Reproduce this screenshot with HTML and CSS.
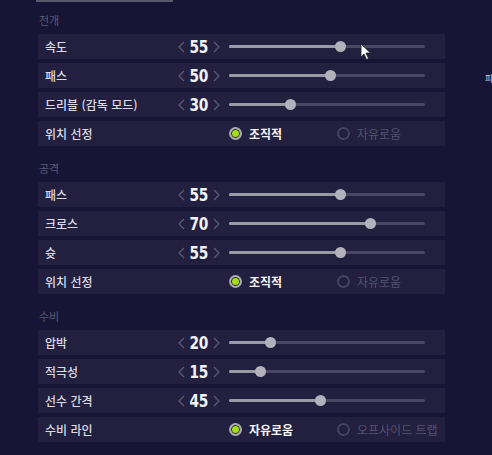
FILE: index.html
```html
<!DOCTYPE html>
<html lang="ko">
<head>
    <meta charset="UTF-8">
    <meta name="viewport" content="width=device-width, initial-scale=1.0">
    <title>전술 설정</title>
    <link rel="stylesheet" href="styles.css">
</head>
<body>
    <div class="tab-line"></div>

    <div class="panel">
        <div class="section">
            <div class="section-title">전개</div>
            <div class="row">
                <span class="label">속도</span>
                <div class="stepper">
                    <svg class="chev" viewBox="0 0 7 12"><polyline points="6,1 1,6 6,11"/></svg>
                    <span class="num">55</span>
                    <svg class="chev" viewBox="0 0 7 12"><polyline points="1,1 6,6 1,11"/></svg>
                </div>
                <div class="slider"><div class="fill" style="width: 111px"></div><div class="thumb" style="left: 111px"></div></div>
            </div>
            <div class="row">
                <span class="label">패스</span>
                <div class="stepper">
                    <svg class="chev" viewBox="0 0 7 12"><polyline points="6,1 1,6 6,11"/></svg>
                    <span class="num">50</span>
                    <svg class="chev" viewBox="0 0 7 12"><polyline points="1,1 6,6 1,11"/></svg>
                </div>
                <div class="slider"><div class="fill" style="width: 101px"></div><div class="thumb" style="left: 101px"></div></div>
            </div>
            <div class="row">
                <span class="label">드리블 (감독 모드)</span>
                <div class="stepper">
                    <svg class="chev" viewBox="0 0 7 12"><polyline points="6,1 1,6 6,11"/></svg>
                    <span class="num">30</span>
                    <svg class="chev" viewBox="0 0 7 12"><polyline points="1,1 6,6 1,11"/></svg>
                </div>
                <div class="slider"><div class="fill" style="width: 61px"></div><div class="thumb" style="left: 61px"></div></div>
            </div>
            <div class="row">
                <span class="label">위치 선정</span>
                <div class="radios">
                    <div class="option selected"><span class="radio"></span>조직적</div>
                    <div class="option"><span class="radio"></span>자유로움</div>
                </div>
            </div>
        </div>

        <div class="section">
            <div class="section-title">공격</div>
            <div class="row">
                <span class="label">패스</span>
                <div class="stepper">
                    <svg class="chev" viewBox="0 0 7 12"><polyline points="6,1 1,6 6,11"/></svg>
                    <span class="num">55</span>
                    <svg class="chev" viewBox="0 0 7 12"><polyline points="1,1 6,6 1,11"/></svg>
                </div>
                <div class="slider"><div class="fill" style="width: 111px"></div><div class="thumb" style="left: 111px"></div></div>
            </div>
            <div class="row">
                <span class="label">크로스</span>
                <div class="stepper">
                    <svg class="chev" viewBox="0 0 7 12"><polyline points="6,1 1,6 6,11"/></svg>
                    <span class="num">70</span>
                    <svg class="chev" viewBox="0 0 7 12"><polyline points="1,1 6,6 1,11"/></svg>
                </div>
                <div class="slider"><div class="fill" style="width: 141px"></div><div class="thumb" style="left: 141px"></div></div>
            </div>
            <div class="row">
                <span class="label">슛</span>
                <div class="stepper">
                    <svg class="chev" viewBox="0 0 7 12"><polyline points="6,1 1,6 6,11"/></svg>
                    <span class="num">55</span>
                    <svg class="chev" viewBox="0 0 7 12"><polyline points="1,1 6,6 1,11"/></svg>
                </div>
                <div class="slider"><div class="fill" style="width: 111px"></div><div class="thumb" style="left: 111px"></div></div>
            </div>
            <div class="row">
                <span class="label">위치 선정</span>
                <div class="radios">
                    <div class="option selected"><span class="radio"></span>조직적</div>
                    <div class="option"><span class="radio"></span>자유로움</div>
                </div>
            </div>
        </div>

        <div class="section">
            <div class="section-title">수비</div>
            <div class="row">
                <span class="label">압박</span>
                <div class="stepper">
                    <svg class="chev" viewBox="0 0 7 12"><polyline points="6,1 1,6 6,11"/></svg>
                    <span class="num">20</span>
                    <svg class="chev" viewBox="0 0 7 12"><polyline points="1,1 6,6 1,11"/></svg>
                </div>
                <div class="slider"><div class="fill" style="width: 41px"></div><div class="thumb" style="left: 41px"></div></div>
            </div>
            <div class="row">
                <span class="label">적극성</span>
                <div class="stepper">
                    <svg class="chev" viewBox="0 0 7 12"><polyline points="6,1 1,6 6,11"/></svg>
                    <span class="num">15</span>
                    <svg class="chev" viewBox="0 0 7 12"><polyline points="1,1 6,6 1,11"/></svg>
                </div>
                <div class="slider"><div class="fill" style="width: 31px"></div><div class="thumb" style="left: 31px"></div></div>
            </div>
            <div class="row">
                <span class="label">선수 간격</span>
                <div class="stepper">
                    <svg class="chev" viewBox="0 0 7 12"><polyline points="6,1 1,6 6,11"/></svg>
                    <span class="num">45</span>
                    <svg class="chev" viewBox="0 0 7 12"><polyline points="1,1 6,6 1,11"/></svg>
                </div>
                <div class="slider"><div class="fill" style="width: 91px"></div><div class="thumb" style="left: 91px"></div></div>
            </div>
            <div class="row">
                <span class="label">수비 라인</span>
                <div class="radios">
                    <div class="option selected"><span class="radio"></span>자유로움</div>
                    <div class="option"><span class="radio"></span>오프사이드 트랩</div>
                </div>
            </div>
        </div>
    </div>

    <div class="side-peek">파</div>

    <svg class="cursor" viewBox="0 0 12 18" width="12" height="18">
        <path d="M1 1 L1 14 L4 11 L6.5 16.5 L8.5 15.5 L6 10 L10.5 10 Z" fill="#fff" stroke="#222" stroke-width="0.8"/>
    </svg>
</body>
</html>
```

FILE: styles.css
```css
body, html {
    margin: 0;
    padding: 0;
    height: 100%;
    overflow: hidden;
}

body {
    background-color: #171535;
    font-family: "Noto Sans CJK KR", "Noto Sans", sans-serif;
    color: #dddce6;
    position: relative;
}

.tab-line {
    margin-left: 36px;
    width: 137px;
    height: 2px;
    background-color: #5b5a6c;
}

.panel {
    width: 407px;
    margin-left: 38px;
}

.section {
    padding-top: 11px;
}

.section + .section {
    padding-top: 11px;
}

.section-title {
    font-size: 11px;
    line-height: 14px;
    height: 14px;
    color: #5c5a76;
    padding-left: 1px;
    margin-bottom: 7px;
}

.row {
    display: flex;
    align-items: center;
    height: 25px;
    margin-bottom: 4px;
    background-color: #221f3f;
    padding-left: 7px;
}

.label {
    width: 129px;
    font-size: 12px;
    font-weight: 500;
    color: #dcdbe5;
    white-space: nowrap;
}

.stepper {
    width: 42px;
    margin-left: 4px;
    display: flex;
    align-items: center;
    justify-content: space-between;
}

.chev {
    width: 7px;
    height: 12px;
}

.chev polyline {
    fill: none;
    stroke: #5f5d78;
    stroke-width: 1.2;
}

.num {
    font-family: "Liberation Sans Narrow", "DejaVu Sans Condensed", sans-serif;
    font-weight: bold;
    font-size: 18px;
    line-height: 18px;
    color: #f2f2f6;
    letter-spacing: -0.5px;
    transform: scaleX(0.85);
}

.slider {
    position: relative;
    width: 196px;
    height: 3px;
    margin-left: 9px;
    background-color: #4a4764;
    border-radius: 2px;
}

.fill {
    height: 3px;
    background-color: #9b9aa6;
    border-radius: 2px;
}

.thumb {
    position: absolute;
    top: -4px;
    width: 11px;
    height: 11px;
    margin-left: -5.5px;
    border-radius: 50%;
    background-color: #b3b2bc;
}

.radios {
    display: flex;
    margin-left: 56px;
}

.option {
    width: 108px;
    display: flex;
    align-items: center;
    gap: 7px;
    font-size: 12px;
    color: #55536d;
    white-space: nowrap;
}

.option.selected {
    color: #f4f4f8;
    font-weight: bold;
}

.radio {
    width: 9px;
    height: 9px;
    border: 2px solid #46445c;
    border-radius: 50%;
}

.option.selected .radio {
    border-color: #acabb4;
    background-color: #a5dc1c;
    box-shadow: inset 0 0 0 1px #222;
}

.side-peek {
    position: absolute;
    left: 485px;
    top: 72px;
    font-size: 9px;
    color: #c8c8d4;
}

.cursor {
    position: absolute;
    left: 360px;
    top: 43px;
}
```
